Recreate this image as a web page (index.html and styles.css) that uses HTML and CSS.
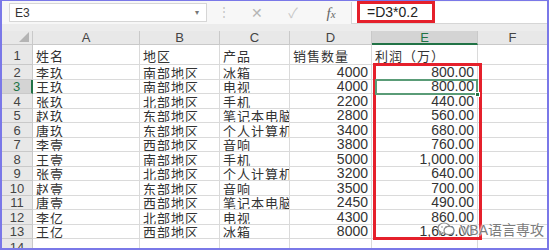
FILE: index.html
```html
<!DOCTYPE html>
<html lang="zh">
<head>
    <meta charset="UTF-8">
    <title>利润计算</title>
    <link rel="stylesheet" href="styles.css">
</head>
<body>
    <div class="window">
        <div class="formula-bar">
            <div class="name-box"><span>E3</span><span class="caret">▾</span></div>
            <div class="dots">⋮</div>
            <div class="fbtn cross">✕</div>
            <div class="fbtn check">✓</div>
            <div class="fbtn fx"><i>f</i><i class="x">x</i></div>
            <div class="formula-input"><span class="formula-hl">=D3*0.2</span></div>
        </div>
        <div class="band"></div>
        <div class="sheet-wrap">
            <div class="sheet">
                <div class="corner"><span class="tri"></span></div>
                <div class="col-h">A</div>
                <div class="col-h">B</div>
                <div class="col-h">C</div>
                <div class="col-h">D</div>
                <div class="col-h sel">E</div>
                <div class="col-h">F</div>

                <div class="row-h">1</div>
                <div class="cell">姓名</div><div class="cell">地区</div><div class="cell">产品</div><div class="cell">销售数量</div><div class="cell">利润（万）</div><div class="cell"></div>

                <div class="row-h">2</div>
                <div class="cell">李玖</div><div class="cell">南部地区</div><div class="cell">冰箱</div><div class="cell num">4000</div><div class="cell num">800.00</div><div class="cell"></div>
                <div class="row-h sel">3</div>
                <div class="cell">王玖</div><div class="cell">南部地区</div><div class="cell">电视</div><div class="cell num">4000</div><div class="cell num">800.00</div><div class="cell"></div>
                <div class="row-h">4</div>
                <div class="cell">张玖</div><div class="cell">北部地区</div><div class="cell">手机</div><div class="cell num">2200</div><div class="cell num">440.00</div><div class="cell"></div>
                <div class="row-h">5</div>
                <div class="cell">赵玖</div><div class="cell">东部地区</div><div class="cell">笔记本电脑</div><div class="cell num">2800</div><div class="cell num">560.00</div><div class="cell"></div>
                <div class="row-h">6</div>
                <div class="cell">唐玖</div><div class="cell">东部地区</div><div class="cell">个人计算机</div><div class="cell num">3400</div><div class="cell num">680.00</div><div class="cell"></div>
                <div class="row-h">7</div>
                <div class="cell">李壹</div><div class="cell">西部地区</div><div class="cell">音响</div><div class="cell num">3800</div><div class="cell num">760.00</div><div class="cell"></div>
                <div class="row-h">8</div>
                <div class="cell">王壹</div><div class="cell">南部地区</div><div class="cell">手机</div><div class="cell num">5000</div><div class="cell num">1,000.00</div><div class="cell"></div>
                <div class="row-h">9</div>
                <div class="cell">张壹</div><div class="cell">北部地区</div><div class="cell">个人计算机</div><div class="cell num">3200</div><div class="cell num">640.00</div><div class="cell"></div>
                <div class="row-h">10</div>
                <div class="cell">赵壹</div><div class="cell">东部地区</div><div class="cell">音响</div><div class="cell num">3500</div><div class="cell num">700.00</div><div class="cell"></div>
                <div class="row-h">11</div>
                <div class="cell">唐壹</div><div class="cell">西部地区</div><div class="cell">笔记本电脑</div><div class="cell num">2450</div><div class="cell num">490.00</div><div class="cell"></div>
                <div class="row-h">12</div>
                <div class="cell">李亿</div><div class="cell">北部地区</div><div class="cell">电视</div><div class="cell num">4300</div><div class="cell num">860.00</div><div class="cell"></div>
                <div class="row-h">13</div>
                <div class="cell">王亿</div><div class="cell">西部地区</div><div class="cell">冰箱</div><div class="cell num">8000</div><div class="cell num">1,600.00</div><div class="cell"></div>
                <div class="row-h last">14</div>
                <div class="cell"></div><div class="cell"></div><div class="cell"></div><div class="cell"></div><div class="cell"></div><div class="cell"></div>
            </div>

            <!-- 选中单元格和红框标注，叠在表格上 -->
            <div class="sheet marks">
                <div class="active-cell"><span class="handle"></span></div>
                <div class="red-mark"></div>
            </div>
        </div>

        <div class="watermark">
            <svg width="18" height="14" viewBox="0 0 18 14">
                <ellipse cx="7" cy="6" rx="6" ry="5" fill="#fff" stroke="#8a8a8a" stroke-width="1.2"/>
                <path d="M3.5 10 L2.8 12.6 L6 10.8" fill="#fff" stroke="#8a8a8a" stroke-width="1.1"/>
                <ellipse cx="12" cy="8.5" rx="5" ry="4.2" fill="#fff" stroke="#8a8a8a" stroke-width="1.2"/>
                <circle cx="5" cy="5" r="0.8" fill="#8a8a8a"/>
                <circle cx="9" cy="5" r="0.8" fill="#8a8a8a"/>
            </svg>
            <span>VBA语言専攻</span>
        </div>
    </div>
</body>
</html>
```

FILE: styles.css
```css
body {
    margin: 0;
    background: #fff;
    font-family: 'Liberation Sans', Arial, 'Noto Sans CJK SC', sans-serif;
    color: #262626;
}
.window {
    position: relative;
    width: 549px;
    height: 250px;
    box-sizing: border-box;
    border: 2px solid #7a78e8;
    border-top-width: 1px;
    overflow: hidden;
    background: #fff;
}
.formula-bar {
    display: flex;
    align-items: stretch;
    height: 23px;
    background: #f7f7f7;
}
.name-box {
    display: flex;
    align-items: center;
    justify-content: space-between;
    width: 198px;
    height: 19px;
    margin: 2px 0 0 7px;
    padding: 0 7px 0 5px;
    box-sizing: border-box;
    background: #fff;
    border: 1px solid #d6d6d6;
    font-size: 12px;
    color: #333;
}
.caret {
    font-size: 8px;
    color: #777;
}
.dots {
    width: 22px;
    margin-left: 6px;
    text-align: center;
    line-height: 23px;
    font-size: 12px;
    color: #c4c4c4;
}
.fbtn {
    width: 36px;
    text-align: center;
    line-height: 24px;
    font-size: 14px;
    color: #b5b5b5;
}
.cross { margin-left: 4px; }
.check { color: #c8c8c8; }
.fx {
    width: 40px;
    font-family: 'Liberation Serif', serif;
    color: #666;
    font-size: 15px;
}
.fx .x { font-size: 11px; }
.formula-input {
    flex: 1;
    margin-top: 1px;
    padding-left: 5px;
    background: #fff;
    border-left: 1px solid #d6d6d6;
    border-bottom: 1px solid #d6d6d6;
}
.formula-hl {
    display: inline-block;
    width: 78px;
    height: 22px;
    margin-top: -1px;
    padding-left: 7px;
    box-sizing: border-box;
    border: 3px solid #e5202b;
    font-size: 14px;
    line-height: 16px;
    color: #222;
}
.band {
    height: 7px;
    background: #ececec;
}
.sheet-wrap {
    position: relative;
}
.sheet {
    display: grid;
    grid-template-columns: 31px 107px 80px 70px 82px 106px 70px;
    grid-template-rows: 14px 20px repeat(12, 14.5px) 12px;
    font-size: 13px;
}
.marks {
    position: absolute;
    inset: 0;
    pointer-events: none;
}
.corner, .col-h, .row-h {
    background: #e8e8e8;
    color: #444;
    border-right: 1px solid #c9c9c9;
    border-bottom: 1px solid #c9c9c9;
    box-sizing: border-box;
}
.corner {
    display: flex;
    align-items: flex-end;
    justify-content: flex-end;
    padding: 0 3px 2px 0;
}
.tri {
    width: 0;
    height: 0;
    border-left: 10px solid transparent;
    border-bottom: 10px solid #b4b4b4;
}
.col-h {
    text-align: center;
    line-height: 14px;
    font-size: 13px;
}
.col-h.sel {
    background: #d4d4d4;
    color: #217346;
    border-bottom: 2px solid #217346;
}
.row-h {
    display: flex;
    align-items: center;
    justify-content: center;
    padding-top: 2px;
    line-height: 12px;
    font-size: 13px;
}
.row-h.last {
    align-items: flex-start;
    padding-top: 3px;
}
.row-h.sel {
    background: #d4d4d4;
    color: #217346;
    border-right: 2px solid #217346;
}
.cell {
    display: flex;
    align-items: center;
    overflow: hidden;
    white-space: nowrap;
    padding: 1px 0 0 3px;
    box-sizing: border-box;
    border-right: 1px solid #dadada;
    border-bottom: 1px solid #dadada;
    font-family: 'Noto Sans CJK SC', sans-serif;
    letter-spacing: 1px;
    line-height: 13px;
    font-size: 13px;
    color: #333;
}
.cell.num {
    justify-content: flex-end;
    padding: 1px 3px 0 0;
    font-family: 'Liberation Sans', Arial, sans-serif;
    letter-spacing: 0;
    font-size: 14px;
    color: #333;
}
.active-cell {
    grid-column: 6;
    grid-row: 4;
    margin: -1px 0 -1px 3px;
    border: 2px solid #5a9c77;
    position: relative;
}
.handle {
    position: absolute;
    right: -4px;
    bottom: -4px;
    width: 5px;
    height: 5px;
    background: #217346;
    border: 1px solid #fff;
    box-sizing: border-box;
}
.red-mark {
    grid-column: 6;
    grid-row: 3 / 15;
    margin: -2px -4px -1px 1px;
    border: 3px solid #e5202b;
}
.watermark {
    position: absolute;
    left: 435px;
    top: 218px;
    display: flex;
    align-items: center;
    gap: 5px;
    font-family: 'Liberation Sans', 'Noto Sans CJK SC', sans-serif;
    font-size: 14px;
    color: #7c7c7c;
    text-shadow: 0 0 2px #fff, 0 0 2px #fff, 0 0 3px #fff;
}
```
